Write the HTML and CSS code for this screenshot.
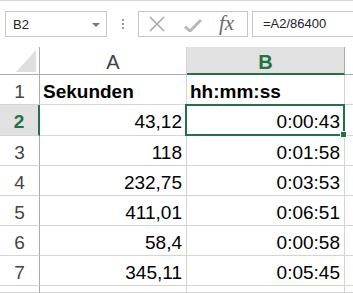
FILE: index.html
```html
<!DOCTYPE html>
<html lang="de">

<head>
    <meta charset="UTF-8">
    <meta name="viewport" content="width=device-width, initial-scale=1.0">
    <title>Sekunden in hh:mm:ss</title>
    <link rel="stylesheet" href="styles.css">
</head>

<body>
    <!-- formula bar -->
    <div class="formula_bar">
        <div class="name_box">
            <span>B2</span>
            <svg class="caret" width="8" height="4" viewBox="0 0 8 4"><path d="M0 0h8L4 4z" fill="#777"/></svg>
        </div>
        <div class="grip"><i></i><i></i><i></i></div>
        <div class="fx_buttons">
            <svg class="icon_cancel" width="16" height="16" viewBox="0 0 16 16">
                <path d="M1 1L15 15M15 1L1 15" stroke="#a9a9a9" stroke-width="1.6" fill="none"/>
            </svg>
            <svg class="icon_enter" width="18" height="13" viewBox="0 0 18 13">
                <path d="M1 7.5L6 12L17 1" stroke="#b8b8b8" stroke-width="3" fill="none" stroke-linejoin="round"/>
            </svg>
            <span class="fx">fx</span>
        </div>
        <div class="formula_input">=A2/86400</div>
    </div>

    <!-- sheet -->
    <div class="sheet">
        <div class="corner"><span class="triangle"></span></div>
        <div class="col_head">A</div>
        <div class="col_head active">B</div>
        <div class="col_head rest"></div>

        <div class="row_head">1</div>
        <div class="cell bold">Sekunden</div>
        <div class="cell bold">hh:mm:ss</div>
        <div class="cell rest"></div>

        <div class="row_head active">2</div>
        <div class="cell num">43,12</div>
        <div class="cell num">0:00:43</div>
        <div class="cell rest"></div>

        <div class="row_head">3</div>
        <div class="cell num">118</div>
        <div class="cell num">0:01:58</div>
        <div class="cell rest"></div>

        <div class="row_head">4</div>
        <div class="cell num">232,75</div>
        <div class="cell num">0:03:53</div>
        <div class="cell rest"></div>

        <div class="row_head">5</div>
        <div class="cell num">411,01</div>
        <div class="cell num">0:06:51</div>
        <div class="cell rest"></div>

        <div class="row_head">6</div>
        <div class="cell num">58,4</div>
        <div class="cell num">0:00:58</div>
        <div class="cell rest"></div>

        <div class="row_head">7</div>
        <div class="cell num">345,11</div>
        <div class="cell num">0:05:45</div>
        <div class="cell rest"></div>

        <div class="row_head"></div>
        <div class="cell"></div>
        <div class="cell"></div>
        <div class="cell rest"></div>

        <!-- active cell outline over B2 -->
        <div class="selection"><span class="fill_handle"></span></div>
    </div>
</body>

</html>
```

FILE: styles.css
```css
* {
    margin: 0;
    padding: 0;
    box-sizing: border-box;
}

body {
    width: 353px;
    height: 293px;
    overflow: hidden;
    background-color: #fff;
    font-family: "Liberation Sans", Arial, sans-serif;
}

/* formula bar */

.formula_bar {
    height: 47px;
    border-top: solid 1px #d5d5d5;
    padding-top: 10px;
    padding-left: 5px;
    display: flex;
    align-items: flex-start;
}

.name_box {
    width: 102px;
    height: 26px;
    border: solid 1px #c6c6c6;
    display: flex;
    align-items: center;
    justify-content: space-between;
    padding: 0 6px 0 7px;
    font-size: 13px;
    color: #222;
}

.caret {
    margin-top: 1px;
}

.grip {
    width: 31px;
    height: 26px;
    display: flex;
    flex-direction: column;
    align-items: center;
    justify-content: center;
    gap: 2px;
}

.grip i {
    width: 2px;
    height: 2px;
    background-color: #9a9a9a;
}

.fx_buttons {
    width: 110px;
    height: 26px;
    border: solid 1px #c6c6c6;
    display: flex;
    align-items: center;
    padding-left: 10px;
}

.icon_cancel {
    margin-right: 19px;
}

.icon_enter {
    margin-right: 17px;
    margin-top: 3px;
}

.fx {
    font-family: "Liberation Serif", "Times New Roman", serif;
    font-style: italic;
    font-size: 21px;
    color: #6a6a6a;
    margin-top: -2px;
}

.formula_input {
    flex: 1;
    height: 26px;
    margin-left: 4px;
    border: solid 1px #c6c6c6;
    border-right: none;
    padding-left: 10px;
    font-size: 13px;
    line-height: 24px;
    color: #222;
}

/* sheet */

.sheet {
    position: relative;
    display: grid;
    grid-template-columns: 40px 147px 158px 1fr;
    grid-template-rows: 28px 30px 31px 30px 30px 30px 30px 30px 1fr;
    height: 246px;
}

.corner {
    border-right: solid 1px #ababab;
    border-bottom: solid 1px #ababab;
    position: relative;
}

.triangle {
    position: absolute;
    right: 3px;
    bottom: 2px;
    width: 0;
    height: 0;
    border-left: solid 20px transparent;
    border-bottom: solid 22px #dfdfdf;
}

.col_head {
    border-right: solid 1px #d4d4d4;
    border-bottom: solid 1px #ababab;
    text-align: center;
    font-size: 20px;
    line-height: 23px;
    padding-top: 4px;
    color: #444;
}

.col_head.active {
    background-color: #e1e1e1;
    border-right-color: #ababab;
    border-bottom: solid 2px #217346;
    color: #217346;
    font-weight: bold;
}

.col_head.rest {
    border-right: none;
}

.row_head {
    border-right: solid 1px #ababab;
    border-bottom: solid 1px #d4d4d4;
    text-align: center;
    font-size: 19px;
    line-height: 22px;
    padding-top: 6px;
    color: #444;
}

.row_head.active {
    background-color: #e1e1e1;
    border-right: solid 2px #217346;
    color: #217346;
    font-weight: bold;
}

.cell {
    border-right: solid 1px #d4d4d4;
    border-bottom: solid 1px #d4d4d4;
    font-size: 19px;
    line-height: 22px;
    padding: 6px 4px 0 3px;
    color: #000;
    white-space: nowrap;
}

.cell.bold {
    font-weight: bold;
}

.cell.num {
    text-align: right;
}

.cell.rest {
    border-right: none;
}

.selection {
    position: absolute;
    left: 185px;
    top: 57px;
    width: 160px;
    height: 32px;
    border: solid 2px #217346;
}

.fill_handle {
    position: absolute;
    right: -4px;
    bottom: -4px;
    width: 7px;
    height: 7px;
    background-color: #217346;
    border: solid 1px #fff;
}
```
